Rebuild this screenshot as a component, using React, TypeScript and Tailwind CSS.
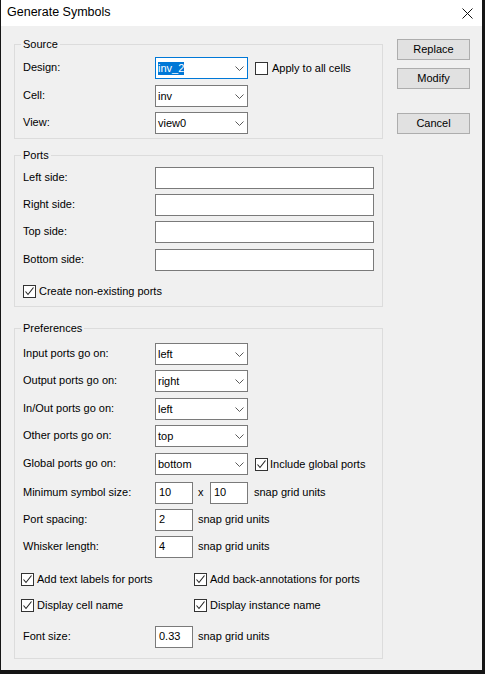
import React from "react";

const Chevron = () => (
  <svg width="9" height="5" viewBox="0 0 9 5" className="shrink-0">
    <path d="M0.5 0.5 L4.5 4.5 L8.5 0.5" fill="none" stroke="#5a5a5a" strokeWidth="1" />
  </svg>
);

const Check = () => (
  <svg width="11" height="11" viewBox="0 0 11 11">
    <path d="M1.5 5.5 L4 8.5 L9.5 1.5" fill="none" stroke="#222" strokeWidth="1.1" />
  </svg>
);

function CheckBox({ checked, label, gap = "ml-[3px]" }: { checked?: boolean; label: string; gap?: string }) {
  return (
    <div className="flex items-center h-[13px]">
      <div className="w-[13px] h-[13px] border border-[#333333] bg-white flex items-center justify-center shrink-0">
        {checked ? <Check /> : null}
      </div>
      <span className={`${gap} whitespace-nowrap leading-[13px]`}>{label}</span>
    </div>
  );
}

function Combo({ value, focused, selected }: { value: string; focused?: boolean; selected?: boolean }) {
  return (
    <div
      className={`flex items-center h-[22px] w-[93px] border bg-white pl-[2px] pr-[3px] shrink-0 ${
        focused ? "border-[#0078d7]" : "border-[#7a7a7a]"
      }`}
    >
      <div className="flex-1 leading-[13px]">
        {selected ? <span className="bg-[#0078d7] text-white inline-block leading-[13px]">{value}</span> : value}
      </div>
      <Chevron />
    </div>
  );
}

function TextBox({ value, w }: { value?: string; w: string }) {
  return (
    <div className={`flex items-center h-[22px] ${w} border border-[#7a7a7a] bg-white pl-[3px] pb-[2px] shrink-0`}>
      {value}
    </div>
  );
}

function Row({ label, children, mt }: { label: string; children: React.ReactNode; mt: string }) {
  return (
    <div className={`flex items-center h-[22px] pl-[8px] ${mt}`}>
      <span className="w-[132px] shrink-0 pb-[1px]">{label}</span>
      {children}
    </div>
  );
}

function Group({ title, mt, pb, children }: { title: string; mt: string; pb: string; children: React.ReactNode }) {
  return (
    <fieldset className={`border border-[#dcdcdc] w-[369px] ${mt} ${pb}`}>
      <legend className="ml-[6px] px-[2px] leading-[15px]">{title}</legend>
      {children}
    </fieldset>
  );
}

function Button({ label, mt }: { label: string; mt: string }) {
  return (
    <div
      className={`w-[73px] h-[21px] border border-[#adadad] bg-[#e1e1e1] flex items-center justify-center pb-[1px] ${mt}`}
    >
      {label}
    </div>
  );
}

export default function App() {
  return (
    <div className="w-[485px] h-[674px] bg-[#151515] pl-[1px] pr-[3px] pb-[4px] flex flex-col [font-family:'Liberation_Sans',Arial,sans-serif] text-[11px] text-black">
      <div className="h-[26px] bg-white flex items-center justify-between pl-[6px] pr-[9px] shrink-0">
        <span className="text-[12.5px] pb-[1px]">Generate Symbols</span>
        <svg width="11" height="11" viewBox="0 0 11 11">
          <path d="M0.5 0.5 L10.5 10.5 M10.5 0.5 L0.5 10.5" stroke="#111" strokeWidth="1" />
        </svg>
      </div>
      <div className="flex-1 bg-[#f0f0f0] flex pl-[13px]">
        <div className="flex flex-col">
          <Group title="Source" mt="mt-[11px]" pb="pb-[4px]">
            <Row label="Design:" mt="mt-[5px]">
              <Combo value="inv_2" focused selected />
              <div className="ml-[7px]">
                <CheckBox label="Apply to all cells" gap="ml-[4px]" />
              </div>
            </Row>
            <Row label="Cell:" mt="mt-[6px]">
              <Combo value="inv" />
            </Row>
            <Row label="View:" mt="mt-[5px]">
              <Combo value="view0" />
            </Row>
          </Group>

          <Group title="Ports" mt="mt-[9px]" pb="pb-[8px]">
            <Row label="Left side:" mt="mt-[4px]">
              <TextBox w="w-[219px]" />
            </Row>
            <Row label="Right side:" mt="mt-[5px]">
              <TextBox w="w-[219px]" />
            </Row>
            <Row label="Top side:" mt="mt-[5px]">
              <TextBox w="w-[219px]" />
            </Row>
            <Row label="Bottom side:" mt="mt-[6px]">
              <TextBox w="w-[219px]" />
            </Row>
            <div className="pl-[8px] mt-[14px]">
              <CheckBox checked label="Create non-existing ports" />
            </div>
          </Group>

          <Group title="Preferences" mt="mt-[14px]" pb="pb-[10px]">
            <Row label="Input ports go on:" mt="mt-[7px]">
              <Combo value="left" />
            </Row>
            <Row label="Output ports go on:" mt="mt-[5px]">
              <Combo value="right" />
            </Row>
            <Row label="In/Out ports go on:" mt="mt-[6px]">
              <Combo value="left" />
            </Row>
            <Row label="Other ports go on:" mt="mt-[5px]">
              <Combo value="top" />
            </Row>
            <Row label="Global ports go on:" mt="mt-[6px]">
              <Combo value="bottom" />
              <div className="ml-[7px]">
                <CheckBox checked label="Include global ports" gap="ml-[2px]" />
              </div>
            </Row>
            <Row label="Minimum symbol size:" mt="mt-[7px]">
              <TextBox value="10" w="w-[38px]" />
              <span className="ml-[5px] w-[12px] pb-[1px]">x</span>
              <TextBox value="10" w="w-[38px]" />
              <span className="ml-[6px] pb-[1px]">snap grid units</span>
            </Row>
            <Row label="Port spacing:" mt="mt-[5px]">
              <TextBox value="2" w="w-[38px]" />
              <span className="ml-[5px] pb-[1px]">snap grid units</span>
            </Row>
            <Row label="Whisker length:" mt="mt-[5px]">
              <TextBox value="4" w="w-[38px]" />
              <span className="ml-[5px] pb-[1px]">snap grid units</span>
            </Row>
            <div className="flex pl-[6px] mt-[15px]">
              <div className="w-[173px]">
                <CheckBox checked label="Add text labels for ports" />
              </div>
              <CheckBox checked label="Add back-annotations for ports" />
            </div>
            <div className="flex pl-[6px] mt-[13px]">
              <div className="w-[173px]">
                <CheckBox checked label="Display cell name" />
              </div>
              <CheckBox checked label="Display instance name" />
            </div>
            <Row label="Font size:" mt="mt-[14px]">
              <TextBox value="0.33" w="w-[38px]" />
              <span className="ml-[5px] pb-[1px]">snap grid units</span>
            </Row>
          </Group>
        </div>
        <div className="flex flex-col ml-[14px] pt-[13px]">
          <Button label="Replace" mt="mt-0" />
          <Button label="Modify" mt="mt-[8px]" />
          <Button label="Cancel" mt="mt-[24px]" />
        </div>
      </div>
    </div>
  );
}
